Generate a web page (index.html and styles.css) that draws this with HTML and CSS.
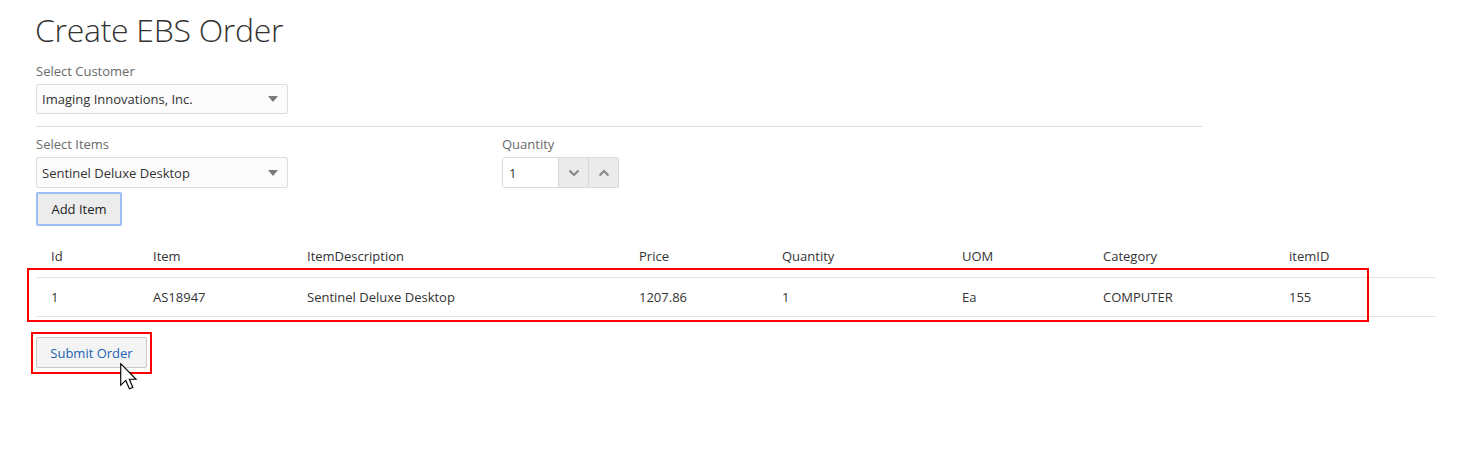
FILE: index.html
```html
<!DOCTYPE html>
<html>
<head>
<meta charset="utf-8">
<link rel="stylesheet" href="styles.css">
</head>
<body>
<div class="page">
  <h1 class="title">Create EBS Order</h1>
  <div class="field">
    <label class="label">Select Customer</label>
    <div class="select select-customer">
      <span class="select-value">Imaging Innovations, Inc.</span>
      <span class="caret"></span>
    </div>
  </div>
  <hr class="divider">
  <div class="items-row">
    <div class="field items-field">
      <label class="label">Select Items</label>
      <div class="select select-items">
        <span class="select-value">Sentinel Deluxe Desktop</span>
        <span class="caret"></span>
      </div>
      <button class="btn btn-add">Add Item</button>
    </div>
    <div class="field qty-field">
      <label class="label">Quantity</label>
      <div class="spinner">
        <span class="spin-input">1</span>
        <span class="spin-btn"><svg width="12" height="8" viewBox="0 0 12 8"><path d="M1.5 1.5 L6 6 L10.5 1.5" fill="none" stroke="#8a8a8a" stroke-width="2.2"/></svg></span>
        <span class="spin-btn"><svg width="12" height="8" viewBox="0 0 12 8"><path d="M1.5 6.5 L6 2 L10.5 6.5" fill="none" stroke="#8a8a8a" stroke-width="2.2"/></svg></span>
      </div>
    </div>
  </div>

  <div class="table">
    <div class="thead">
      <div class="cell c1">Id</div>
      <div class="cell c2">Item</div>
      <div class="cell c3">ItemDescription</div>
      <div class="cell c4">Price</div>
      <div class="cell c5">Quantity</div>
      <div class="cell c6">UOM</div>
      <div class="cell c7">Category</div>
      <div class="cell c8">itemID</div>
    </div>
    <div class="trow">
      <div class="cell c1">1</div>
      <div class="cell c2">AS18947</div>
      <div class="cell c3">Sentinel Deluxe Desktop</div>
      <div class="cell c4">1207.86</div>
      <div class="cell c5">1</div>
      <div class="cell c6">Ea</div>
      <div class="cell c7">COMPUTER</div>
      <div class="cell c8">155</div>
      <div class="highlight highlight-row"></div>
    </div>
  </div>

  <div class="submit-wrap">
    <button class="btn btn-submit">Submit Order</button>
    <div class="highlight highlight-submit"></div>
    <svg class="cursor" width="18" height="28" viewBox="0 0 14 22">
      <path d="M0.5 0.5 L0.5 17.5 L4.5 13.7 L7.3 20.3 L10 19.2 L7.3 12.8 L12.5 12.8 Z" fill="#fff" stroke="#000" stroke-width="0.9" stroke-linejoin="miter"/>
    </svg>
  </div>
</div>
</body>
</html>
```

FILE: styles.css
```css
* { box-sizing: border-box; }
html, body { margin: 0; padding: 0; background: #fff; }
body {
  font-family: "Open Sans", "Noto Sans", "Liberation Sans", sans-serif;
  color: #333;
  font-size: 13px;
  min-height: 100vh;
}
.page {
  padding: 0 0 0 36px;
  min-height: 473px;
}
.title {
  margin: 10px 0 0 -1px;
  font-weight: 300;
  font-size: 32px;
  line-height: 40px;
  color: #333;
  letter-spacing: -0.3px;
}
.field {
  display: flex;
  flex-direction: column;
}
.label {
  margin-top: 12px;
  line-height: 18px;
  color: #6a6a6a;
  font-size: 13px;
  margin-bottom: 4px;
}
.select {
  width: 252px;
  height: 30px;
  border: 1px solid #dcdcdc;
  border-radius: 2px;
  background: #fbfbfb;
  display: flex;
  align-items: center;
  justify-content: space-between;
  padding: 0 9px 0 5px;
  font-size: 13px;
  color: #333;
}
.select-items { height: 31px; }
.caret {
  width: 0;
  height: 0;
  border-left: 5px solid transparent;
  border-right: 5px solid transparent;
  border-top: 6px solid #7a7a7a;
}
.divider {
  width: 1166px;
  margin: 12px 0 0 0;
  border: 0;
  border-top: 1px solid #dcdcdc;
  height: 0;
}
.items-row {
  display: flex;
  gap: 214px;
}
.items-field .label { margin-top: 8px; }
.qty-field .label { margin-top: 8px; }
.btn {
  font-family: inherit;
  font-size: 13px;
  cursor: pointer;
}
.btn-add {
  margin-top: 4px;
  width: 86px;
  height: 34px;
  background: #ececec;
  border: 2px solid #9ebdf2;
  border-radius: 2px;
  color: #222;
  padding: 0;
}
.spinner {
  display: flex;
  width: 117px;
  height: 31px;
  border: 1px solid #dcdcdc;
  border-radius: 2px;
}
.spin-input {
  flex: 1;
  display: flex;
  align-items: center;
  padding-left: 6px;
  background: #fff;
  font-size: 13px;
}
.spin-btn {
  width: 30px;
  display: flex;
  align-items: center;
  justify-content: center;
  background: #ebebeb;
  border-left: 1px solid #d6d6d6;
}
.table {
  margin-top: 11px;
  width: 1398px;
  margin-left: 1px;
}
.thead, .trow {
  display: grid;
  grid-template-columns: 102px 154px 332px 143px 180px 141px 186px 1fr;
  align-items: center;
}
.thead {
  height: 41px;
  padding-bottom: 2px;
  border-bottom: 1px solid #e2e2e2;
  color: #333;
}
.trow {
  position: relative;
  height: 39px;
  border-bottom: 1px solid #e2e2e2;
}
.cell {
  padding-left: 14px;
  font-size: 13px;
  white-space: nowrap;
}
.highlight {
  position: absolute;
  border: 2px solid #ff0000;
  pointer-events: none;
}
.highlight-row {
  left: -10px;
  top: -10px;
  width: 1342px;
  height: 54px;
}
.submit-wrap {
  position: relative;
  margin-top: 20px;
  width: 111px;
}
.btn-submit {
  width: 111px;
  height: 31px;
  background: #f4f4f4;
  border: 1px solid #c9c9c9;
  border-radius: 2px;
  color: #1a63b0;
  padding: 0;
  display: block;
}
.highlight-submit {
  left: -5px;
  top: -5px;
  width: 121px;
  height: 42px;
}
.cursor {
  position: absolute;
  left: 84px;
  top: 26px;
}
```
